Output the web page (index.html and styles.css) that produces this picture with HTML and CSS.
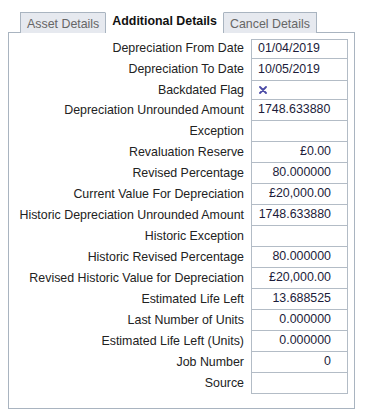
FILE: index.html
```html
<!DOCTYPE html>
<html lang="en">
<head>
  <meta charset="UTF-8">
  <title>Additional Details</title>
  <link rel="stylesheet" href="styles.css">
</head>
<body>

  <div class="tabs">
    <div class="tab">Asset Details</div>
    <div class="tab active">Additional Details</div>
    <div class="tab">Cancel Details</div>
  </div>

  <div class="panel">
    <div class="row first">
      <div class="label">Depreciation From Date</div>
      <div class="value">01/04/2019</div>
    </div>
    <div class="row tall">
      <div class="label">Depreciation To Date</div>
      <div class="value">10/05/2019</div>
    </div>
    <div class="row short">
      <div class="label">Backdated Flag</div>
      <div class="value">
        <svg class="flag" width="8" height="8" viewBox="0 0 8 8">
          <path d="M1 1 L7 7 M7 1 L1 7" stroke="#4b4ba6" stroke-width="1.8" stroke-linecap="round"/>
        </svg>
      </div>
    </div>
    <div class="row">
      <div class="label">Depreciation Unrounded Amount</div>
      <div class="value">1748.633880</div>
    </div>
    <div class="row">
      <div class="label">Exception</div>
      <div class="value"></div>
    </div>
    <div class="row">
      <div class="label">Revaluation Reserve</div>
      <div class="value num">£0.00</div>
    </div>
    <div class="row">
      <div class="label">Revised Percentage</div>
      <div class="value num">80.000000</div>
    </div>
    <div class="row">
      <div class="label">Current Value For Depreciation</div>
      <div class="value num">£20,000.00</div>
    </div>
    <div class="row">
      <div class="label">Historic Depreciation Unrounded Amount</div>
      <div class="value num">1748.633880</div>
    </div>
    <div class="row">
      <div class="label">Historic Exception</div>
      <div class="value"></div>
    </div>
    <div class="row">
      <div class="label">Historic Revised Percentage</div>
      <div class="value num">80.000000</div>
    </div>
    <div class="row">
      <div class="label">Revised Historic Value for Depreciation</div>
      <div class="value num">£20,000.00</div>
    </div>
    <div class="row">
      <div class="label">Estimated Life Left</div>
      <div class="value num">13.688525</div>
    </div>
    <div class="row">
      <div class="label">Last Number of Units</div>
      <div class="value num">0.000000</div>
    </div>
    <div class="row">
      <div class="label">Estimated Life Left (Units)</div>
      <div class="value num">0.000000</div>
    </div>
    <div class="row">
      <div class="label">Job Number</div>
      <div class="value num">0</div>
    </div>
    <div class="row">
      <div class="label">Source</div>
      <div class="value"></div>
    </div>
  </div>

</body>
</html>
```

FILE: styles.css
```css
body {
  font-family: "Liberation Sans", Arial, sans-serif;
  margin: 0;
  padding: 12px 0 0 8px;
  background-color: #fff;
  color: #222;
}

.tabs {
  display: flex;
  margin-left: 12px;
  height: 20px;
}

.tab {
  box-sizing: border-box;
  height: 21px;
  border: 1px solid #a9b4c0;
  border-bottom: none;
  background-color: #e6e9ef;
  color: #666;
  font-size: 12.4px;
  padding: 4px 6px 0 6px;
  margin-left: -1px;
  white-space: nowrap;
}

.tab:first-child {
  margin-left: 0;
}

.tab.active {
  position: relative;
  z-index: 1;
  background-color: #fff;
  border-top-color: #fff;
  color: #111;
  font-weight: bold;
  padding-top: 1px;
}

.panel {
  box-sizing: border-box;
  width: 347px;
  height: 377px;
  border: 1px solid #a9b4c0;
  padding: 6px 6px 0 0;
}

.row {
  display: flex;
  height: 21px;
  font-size: 12.4px;
}

.row.first {
  height: 20px;
}

.row.tall {
  height: 22px;
}

.row.short {
  height: 19px;
}

.label {
  flex: 1;
  padding: 0 7px 2px 0;
  display: flex;
  align-items: center;
  justify-content: flex-end;
  white-space: nowrap;
}

.value {
  box-sizing: border-box;
  width: 97px;
  border: 1px solid #b3bcc6;
  border-top: none;
  padding: 0 16px 2px 6px;
  display: flex;
  align-items: center;
  color: #1c1c3a;
}

.row.first .value {
  border-top: 1px solid #b3bcc6;
}

.value.num {
  justify-content: flex-end;
}

.flag {
  margin: 2px 0 0 1px;
}
```
